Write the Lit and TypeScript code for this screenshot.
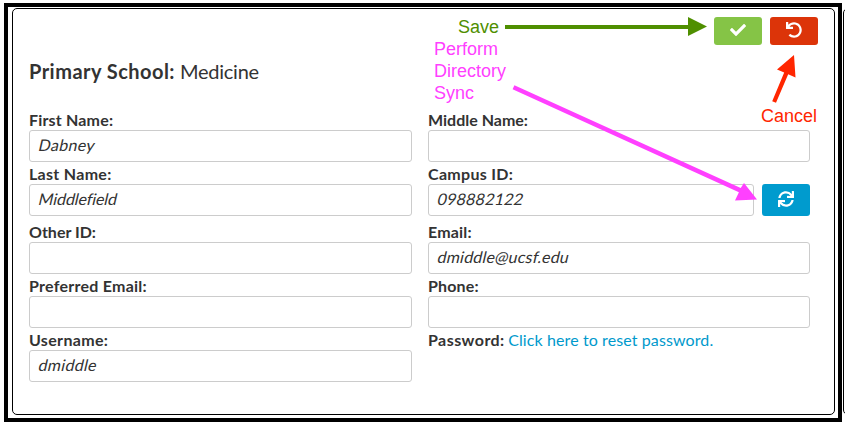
import { LitElement, html, css, svg } from "lit";
import { customElement } from "lit/decorators.js";

interface Field {
  label: string;
  labelWidth: number;
  value?: string;
  valueWidth?: number;
  sync?: boolean;
  link?: string;
  linkWidth?: number;
}

const FIELDS: Field[] = [
  { label: "First Name:", labelWidth: 84, value: "Dabney", valueWidth: 56 },
  { label: "Middle Name:", labelWidth: 100 },
  { label: "Last Name:", labelWidth: 83, value: "Middlefield", valueWidth: 78 },
  { label: "Campus ID:", labelWidth: 85, value: "098882122", valueWidth: 86, sync: true },
  { label: "Other ID:", labelWidth: 67 },
  { label: "Email:", labelWidth: 44, value: "dmiddle@ucsf.edu", valueWidth: 131 },
  { label: "Preferred Email:", labelWidth: 118 },
  { label: "Phone:", labelWidth: 51 },
  { label: "Username:", labelWidth: 79, value: "dmiddle", valueWidth: 58 },
  { label: "Password:", labelWidth: 77, link: "Click here to reset password.", linkWidth: 205 },
];

const checkIcon = svg`<path fill="#fff" d="M173.898 439.404l-166.4-166.4c-9.997-9.997-9.997-26.206 0-36.204l36.203-36.204c9.997-9.998 26.207-9.998 36.204 0L192 312.69 432.095 72.596c9.997-9.997 26.207-9.997 36.204 0l36.203 36.204c9.997 9.997 9.997 26.206 0 36.204l-294.4 294.401c-9.998 9.997-26.207 9.997-36.204-.001z"/>`;
const undoIcon = svg`<path fill="#fff" d="M212.333 224.333H12c-6.627 0-12-5.373-12-12V12C0 5.373 5.373 0 12 0h48c6.627 0 12 5.373 12 12v78.112C117.773 39.279 184.26 7.47 258.175 8.007c136.906.994 246.448 111.623 246.157 248.532C504.041 393.258 393.12 504 256.333 504c-64.089 0-122.496-24.313-166.51-64.215-5.099-4.622-5.334-12.554-.467-17.42l33.967-33.967c4.474-4.474 11.662-4.717 16.401-.525C170.76 415.336 211.58 432 256.333 432c97.268 0 176-78.716 176-176 0-97.267-78.716-176-176-176-58.496 0-110.28 28.476-142.274 72.333h98.274c6.627 0 12 5.373 12 12v48c0 6.627-5.373 12-12 12z"/>`;
const syncIcon = svg`<path fill="#fff" d="M440.65 12.57l4 82.77A247.16 247.16 0 0 0 255.83 8C134.73 8 33.91 94.92 12.29 209.82A12 12 0 0 0 24.09 224h49.05a12 12 0 0 0 11.67-9.26 175.91 175.91 0 0 1 317-56.94l-101.46-4.86a12 12 0 0 0-12.57 12v47.41a12 12 0 0 0 12 12H500a12 12 0 0 0 12-12V12a12 12 0 0 0-12-12h-47.37a12 12 0 0 0-11.98 12.57zM255.83 432a175.61 175.61 0 0 1-146-77.8l101.8 4.87a12 12 0 0 0 12.57-12v-47.4a12 12 0 0 0-12-12H12a12 12 0 0 0-12 12V500a12 12 0 0 0 12 12h47.35a12 12 0 0 0 12-12.6l-4.15-82.57A247.17 247.17 0 0 0 255.83 504c121.11 0 221.93-86.92 243.55-201.82a12 12 0 0 0-11.8-14.18h-49.05a12 12 0 0 0-11.67 9.26A175.86 175.86 0 0 1 255.83 432z"/>`;

@customElement("app-root")
export class AppRoot extends LitElement {
  static styles = css`
    :host { display: block; width: 845px; height: 423px; overflow: hidden; background: #fff; color: #333;
      font: 16px/22px Lato, "Open Sans", sans-serif; }
    * { box-sizing: border-box; }
    .page { position: relative; display: flex; height: 423px; padding: 3px 0 1px 4px; overflow: hidden; }
    .frame { flex: none; width: 838px; height: 419px; border: 4px solid #000; padding: 1px 3px 3px 4px; }
    .card { width: 823px; height: 407px; border: 1px solid #000; border-radius: 5px; padding: 8px 16px; }
    .next { flex: none; width: 20px; height: 407px; margin: 5px 0 0 1px; border: 1px solid #000; border-radius: 5px; }
    .actions { display: flex; justify-content: flex-end; gap: 8px; height: 28px; }
    .btn { flex: none; display: flex; align-items: center; justify-content: center; width: 48px; height: 28px;
      padding: 0 0 2px; border: 0; border-radius: 3px; }
    .save { background: #85c446; }
    .cancel { background: #dc3409; }
    .sync { height: 32px; background: #009bce; }
    .icon { display: block; width: 16px; height: 16px; }
    h2 { margin: 11px 0 0; font-size: 20px; line-height: 30px; font-weight: 400; height: 52px; display: flex; gap: 5px; }
    b { font-weight: 700; }
    .grid { display: grid; grid-template-columns: 383px 382px; column-gap: 16px; grid-template-rows: 54px 58px 54px 54px 54px; }
    .label { display: flex; gap: 3.5px; height: 22px; padding-top: 1px; font-weight: 700; white-space: nowrap; }
    .line { display: flex; gap: 8px; }
    .box { flex: 1; height: 32px; border: 1px solid #ccc; border-radius: 3px; padding: 3px 9px; line-height: 22px; }
    .box .fit { transform: skewX(-13deg); }
    .link { color: #0099cc; font-weight: 400; }
    .fit { display: inline-block; white-space: nowrap; }
    .notes { position: absolute; left: 0; top: 0; width: 845px; height: 423px; font: 18px "Liberation Sans", sans-serif; }
  `;

  /** Spreads each run of text over its design width. */
  firstUpdated() {
    this.renderRoot.querySelectorAll<HTMLElement>("[data-width]").forEach((el) => {
      const gap = Number(el.dataset.width) - el.offsetWidth;
      el.style.letterSpacing = `${gap / (el.textContent ?? "").length}px`;
    });
  }

  private text(value: string, width: number) {
    return html`<span class="fit" data-width=${width}>${value}</span>`;
  }

  private field(f: Field) {
    return html`<div>
      <div class="label">${this.text(f.label, f.labelWidth)}
        ${f.link ? html`<a class="link">${this.text(f.link, f.linkWidth!)}</a>` : ""}</div>
      ${f.link ? "" : html`<div class="line">
        <div class="box">${f.value ? this.text(f.value, f.valueWidth!) : ""}</div>
        ${f.sync ? html`<button class="btn sync"><svg class="icon" viewBox="0 0 512 512">${syncIcon}</svg></button>` : ""}
      </div>`}
    </div>`;
  }

  render() {
    return html`<div class="page">
      <div class="frame"><div class="card">
        <div class="actions">
          <button class="btn save"><svg class="icon" viewBox="0 0 512 512">${checkIcon}</svg></button>
          <button class="btn cancel"><svg class="icon" viewBox="0 0 512 512">${undoIcon}</svg></button>
        </div>
        <h2><b>${this.text("Primary School:", 146)}</b>${this.text("Medicine", 79)}</h2>
        <div class="grid">${FIELDS.map((f) => this.field(f))}</div>
      </div></div>
      <div class="next"></div>
      <svg class="notes" viewBox="0 0 845 423">
        <g fill="#4f8f00"><text x="458" y="33">Save</text>
          <path d="M505 25H688V17L707 26.500L688 36V29H505Z"/></g>
        <g fill="#ff40ff"><text x="434" y="55">Perform</text><text x="434" y="77">Directory</text><text x="434" y="99">Sync</text>
          <path d="M512.600 89.200L514.400 85.200L740.700 188L744 183L757 199.500L735 200.500L738.900 192.200Z"/></g>
        <g fill="#ff2600"><text x="761" y="122">Cancel</text>
          <path d="M772.200 101.200L776 102.800L788.200 74.300L795.500 77.500L794 55L777 69.500L784.200 72.600Z"/></g>
      </svg>
    </div>`;
  }
}
